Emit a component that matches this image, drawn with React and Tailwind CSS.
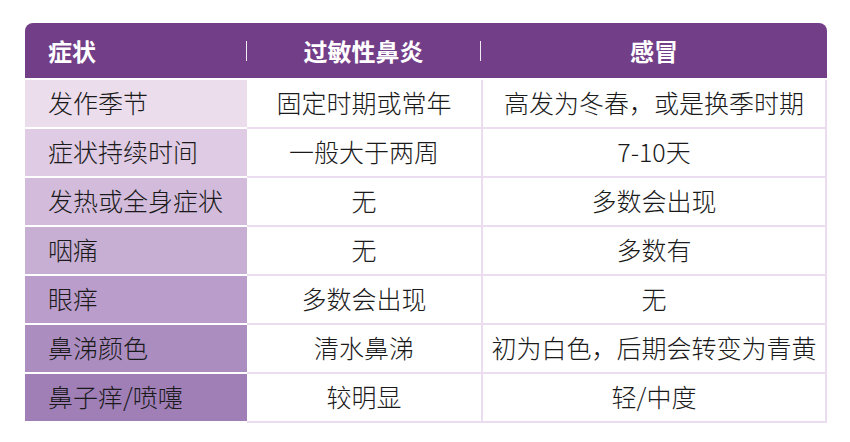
import React from "react";

const rows = [
  { name: "发作季节", allergy: "固定时期或常年", cold: "高发为冬春，或是换季时期", bg: "bg-[#ecdded]" },
  { name: "症状持续时间", allergy: "一般大于两周", cold: "7-10天", bg: "bg-[#dfcbe3]" },
  { name: "发热或全身症状", allergy: "无", cold: "多数会出现", bg: "bg-[#d3bcdb]" },
  { name: "咽痛", allergy: "无", cold: "多数有", bg: "bg-[#c7afd4]" },
  { name: "眼痒", allergy: "多数会出现", cold: "无", bg: "bg-[#ba9dca]" },
  { name: "鼻涕颜色", allergy: "清水鼻涕", cold: "初为白色，后期会转变为青黄", bg: "bg-[#ac8dc0]" },
  { name: "鼻子痒/喷嚏", allergy: "较明显", cold: "轻/中度", bg: "bg-[#a07fb7]" },
];

const App = () => {
  return (
    <div
      className="w-[850px] h-[442px] bg-white pt-[23px] pl-[25px]"
      style={{ fontFamily: '"Noto Sans CJK SC", "Noto Sans", sans-serif' }}
    >
      <div className="w-[802px]">
        <div className="grid grid-cols-[222px_234px_346px] h-[55px] bg-[#733e88] rounded-t-[8px] text-white font-bold text-[24px] items-center">
          <div className="pl-[23px] border-r border-white/90 h-[20px] flex items-center">症状</div>
          <div className="text-center border-r border-white/90 h-[20px] flex items-center justify-center">过敏性鼻炎</div>
          <div className="text-center">感冒</div>
        </div>
        <div className="h-[2px]" />
        {rows.map((row) => (
          <div key={row.name} className="grid grid-cols-[222px_234px_346px] h-[49px] text-[25px] font-light text-[#1a1a1a]">
            <div className={`${row.bg} border-b-2 border-white pl-[23px] flex items-center leading-none pb-[3px]`}>
              {row.name}
            </div>
            <div className="border-b-2 border-[#ecdcef] flex items-center justify-center leading-none pb-[3px]">
              {row.allergy}
            </div>
            <div className="border-b-2 border-x-2 border-[#ecdcef] flex items-center justify-center leading-none pb-[3px] whitespace-nowrap">
              {row.cold}
            </div>
          </div>
        ))}
      </div>
    </div>
  );
};

export default App;
